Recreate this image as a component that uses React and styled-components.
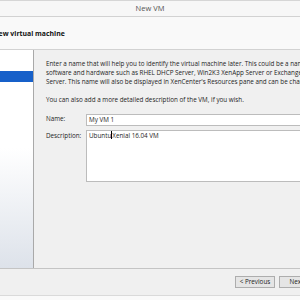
import styled, { createGlobalStyle } from "styled-components";

const Global = createGlobalStyle`
  html, body { margin: 0; padding: 0; background: #f0f0f0; }
  body { width: 300px; height: 300px; overflow: hidden; }
`;

const lines = [
  "Enter a name that will help you to identify the virtual machine later. This could be a name that describes its",
  "software and hardware such as RHEL DHCP Server, Win2K3 XenApp Server or Exchange 2007 Client Access",
  "Server. This name will also be displayed in XenCenter's Resources pane and can be changed later.",
];

export default function App() {
  return (
    <>
      <Global />
      <Window>
        <TitleBar>New VM</TitleBar>
        <Header>
          <HeaderText>New virtual machine</HeaderText>
        </Header>
        <Body>
          <Nav>
            <NavItem />
            <NavItem $active />
          </Nav>
          <Content>
            <Para>
              {lines.map((l) => (
                <Line key={l}>{l}</Line>
              ))}
            </Para>
            <Para>
              <Line>You can also add a more detailed description of the VM, if you wish.</Line>
            </Para>
            <Field>
              <Label>Name:</Label>
              <Input>My VM 1</Input>
            </Field>
            <Field>
              <Label>Description:</Label>
              <TextArea>
                Ubuntu<Caret />Xenial 16.04 VM
              </TextArea>
            </Field>
          </Content>
        </Body>
        <Footer>
          <Btn>&lt; Previous</Btn>
          <Btn>Next &gt;</Btn>
        </Footer>
        <Bottom />
      </Window>
    </>
  );
}

/* ---------- styled ---------- */

const Window = styled.div`
  width: 300px;
  height: 300px;
  display: flex;
  flex-direction: column;
  font-family: "Open Sans", "Noto Sans", sans-serif;
  color: #1e1e1e;
  overflow: hidden;
`;

const TitleBar = styled.div`
  height: 15px;
  border-top: 1px solid #d6d6d6;
  border-bottom: 1px solid #d2d2d2;
  background: #f7f7f7;
  color: #555;
  font-size: 7.5px;
  line-height: 15px;
  text-align: center;
`;

const Header = styled.div`
  height: 32px;
  border-bottom: 1px solid #d2d2d2;
  background: #f9f9f9;
  display: flex;
  align-items: center;
`;

const HeaderText = styled.div`
  margin-left: -7px;
  font-size: 6.9px;
  font-weight: 700;
  color: #111;
  white-space: nowrap;
`;

const Body = styled.div`
  height: 218px;
  display: flex;
  border-bottom: 1px solid #c4c4c4;
`;

const Nav = styled.div`
  width: 33px;
  flex: none;
  border-right: 1px solid #a9a9a9;
  background: linear-gradient(180deg, #ffffff 0%, #ffffff 45%, #dde2ea 100%);
  padding-top: 10px;
  display: flex;
  flex-direction: column;
`;

const NavItem = styled.div`
  height: 11px;
  background: ${({ $active }) => ($active ? "#1760c9" : "transparent")};
`;

const Content = styled.div`
  flex: 1;
  background: #f0f0f0;
  padding: 9px 0 0 12px;
  display: flex;
  flex-direction: column;
  font-size: 6.3px;
  line-height: 9px;
  min-width: 0;
  overflow: hidden;
`;

const Para = styled.div`
  margin-bottom: 9px;
`;

const Line = styled.div`
  white-space: nowrap;
`;

const Field = styled.div`
  display: flex;
  margin-bottom: 4px;
`;

const Label = styled.div`
  width: 40px;
  flex: none;
  padding-top: 1px;
`;

const Input = styled.div`
  flex: 1;
  height: 10px;
  background: #fff;
  border: 1px solid #bcbcbc;
  border-right: none;
  padding-left: 2px;
  line-height: 10px;
  margin-top: 1px;
`;

const TextArea = styled.div`
  flex: 1;
  height: 50px;
  background: #fff;
  border: 1px solid #bcbcbc;
  border-right: none;
  padding-left: 2px;
  line-height: 10px;
`;

const Caret = styled.span`
  display: inline-block;
  width: 1px;
  height: 8px;
  background: #000;
  vertical-align: -1px;
`;

const Footer = styled.div`
  height: 26px;
  border-bottom: 1px solid #dadada;
  background: #f0f0f0;
  display: flex;
  align-items: center;
  padding-left: 235px;
  gap: 4px;
`;

const Btn = styled.div`
  flex: none;
  width: 38px;
  height: 10px;
  border: 1px solid #adadad;
  background: #e5e5e5;
  font-size: 6.3px;
  line-height: 10px;
  text-align: center;
  color: #222;
  white-space: nowrap;
`;

const Bottom = styled.div`
  flex: 1;
  background: #fafafa;
`;
